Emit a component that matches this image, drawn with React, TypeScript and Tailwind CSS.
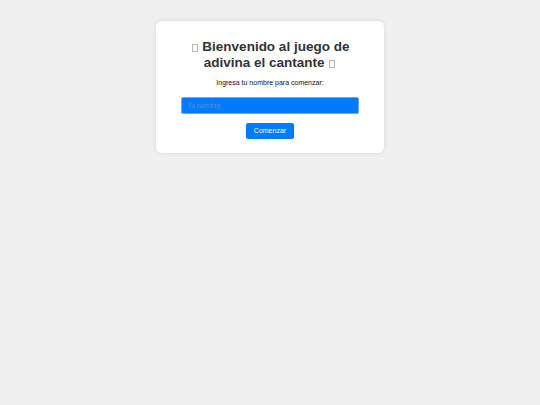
function Tofu() {
  return <span className="inline-block h-[8px] w-[6px] border border-[#b5b5b5] align-[-1px] mx-[1px]" />;
}

export default function App() {
  return (
    <div className="min-h-[405px] bg-[#f0f0f0] pt-[21px] font-['Liberation_Sans',Arial,sans-serif]">
      <div className="mx-auto w-[228px] rounded-[6px] bg-white px-[25px] pt-[18px] pb-[13px] text-center shadow-[0_0_5px_rgba(0,0,0,0.1)]">
        <h1 className="text-[13.5px] font-bold leading-[16px] text-[#333]">
          <Tofu /> Bienvenido al juego de adivina el cantante <Tofu />
        </h1>
        <p className="mt-[7px] text-[7px] leading-[9px] text-[#111]">Ingresa tu nombre para comenzar:</p>
        <input
          type="text"
          placeholder="Tu nombre"
          className="mt-[10px] block h-[17px] w-full rounded-[2px] border border-[#6aa8f0] bg-[#007bff] px-[5px] text-[7px] text-white placeholder:text-[#6d89b4] outline-none"
        />
        <button className="mt-[9px] h-[16px] w-[48px] rounded-[2px] bg-[#007bff] text-[7px] text-white">
          Comenzar
        </button>
      </div>
    </div>
  );
}
